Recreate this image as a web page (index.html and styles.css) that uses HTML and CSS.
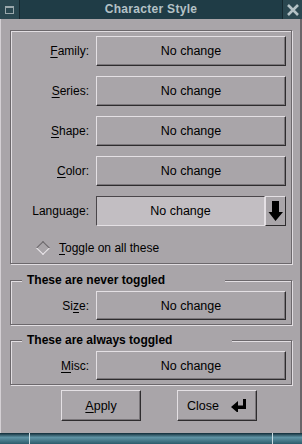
FILE: index.html
```html
<!DOCTYPE html>
<html>
<head>
<meta charset="utf-8">
<link rel="stylesheet" href="styles.css">
</head>
<body>
<div class="titlebar">
  <div class="tb-icon"><span class="tb-square"></span></div>
  <div class="tb-title">Character Style</div>
  <div class="tb-close">
    <svg width="14" height="14" viewBox="0 0 14 14"><path d="M2 2L12 12M12 2L2 12" stroke="#b4c2c6" stroke-width="2.6" fill="none"/></svg>
  </div>
</div>
<div class="window">
  <div class="frame main">
    <div class="row"><span class="label"><u>F</u>amily:</span><div class="btn field">No change</div></div>
    <div class="row"><span class="label"><u>S</u>eries:</span><div class="btn field">No change</div></div>
    <div class="row"><span class="label"><u>S</u>hape:</span><div class="btn field">No change</div></div>
    <div class="row"><span class="label"><u>C</u>olor:</span><div class="btn field">No change</div></div>
    <div class="row"><span class="label">Language:</span>
      <div class="combo">
        <div class="entry">No change</div>
        <div class="arrow-btn">
          <svg width="16" height="22" viewBox="0 0 16 22"><path d="M4 1H11V12H15L7.5 21L0.5 12H4Z" fill="#000"/></svg>
        </div>
      </div>
    </div>
    <div class="toggle"><span class="diamond"></span><span><u>T</u>oggle on all these</span></div>
  </div>

  <div class="frame sub first">
    <span class="legend">These are never toggled</span>
    <div class="row short"><span class="label">Si<u>z</u>e:</span><div class="btn field">No change</div></div>
  </div>

  <div class="frame sub second">
    <span class="legend">These are always toggled</span>
    <div class="row short"><span class="label"><u>M</u>isc:</span><div class="btn field">No change</div></div>
  </div>

  <div class="actions">
    <div class="btn action"><u>A</u>pply</div>
    <div class="btn action close">Close
      <svg width="16" height="13" viewBox="0 0 16 13"><path d="M0 8L7 2V6.5H12V0H15V10H7V14Z" fill="#000"/></svg>
    </div>
  </div>
</div>
<div class="taskbar"><span class="tick"></span><span class="grow"></span><span class="tick"></span></div>
</body>
</html>
```
FILE: styles.css
```css
html, body {
  margin: 0;
  padding: 0;
}
body {
  width: 302px;
  height: 444px;
  overflow: hidden;
  background: #a9a5a9;
  font-family: "Liberation Sans", Arial, sans-serif;
  font-size: 12px;
  color: #000;
}
u { text-decoration: underline; text-underline-offset: 2px; }

.titlebar {
  height: 19px;
  display: flex;
  background: #1f3c46;
}
.tb-icon {
  width: 19px;
  border-right: 1px solid #15282f;
  background: #2a4750;
  display: flex;
  align-items: center;
  justify-content: center;
}
.tb-square {
  width: 9px;
  height: 8px;
  border: 1px solid #9aa8ac;
  border-top-width: 2px;
  box-sizing: border-box;
}
.tb-title {
  flex: 1;
  text-align: center;
  line-height: 19px;
  font-weight: bold;
  color: #b4c2c6;
  letter-spacing: 0.3px;
}
.tb-close {
  width: 19px;
  border-left: 1px solid #15282f;
  background: #2a4750;
  display: flex;
  align-items: center;
  justify-content: center;
}

.window {
  height: 414px;
  border-left: 1px solid #d4d0d4;
  border-right: 2px solid #6a666a;
  box-sizing: border-box;
  padding-top: 11px;
  display: flex;
  flex-direction: column;
}

.frame {
  position: relative;
  margin-left: 9px;
  width: 282px;
  box-sizing: border-box;
  border: 1px solid #6c686c;
  box-shadow: inset 1px 1px 0 #e2dee2, 1px 1px 0 #e2dee2;
  padding: 5px 5px 0 0;
}
.main {
  display: flex;
  flex-direction: column;
  gap: 10px;
  padding-bottom: 7px;
}
.row {
  display: flex;
  align-items: center;
  gap: 7px;
  height: 30px;
}
.row.short { height: 29px; }
.label {
  width: 78px;
  text-align: right;
}
.btn {
  box-sizing: border-box;
  border-top: 1px solid #e4e0e4;
  border-left: 1px solid #e4e0e4;
  border-right: 1px solid #2e2c2e;
  border-bottom: 1px solid #2e2c2e;
  box-shadow: inset -1px -1px 0 #7a767a;
  background: #a9a5a9;
  display: flex;
  align-items: center;
  justify-content: center;
  font-size: 12.5px;
}
.field {
  width: 190px;
  height: 100%;
}
.combo {
  width: 190px;
  height: 100%;
  display: flex;
}
.entry {
  flex: 1;
  box-sizing: border-box;
  background: #c2bec2;
  border-top: 1px solid #4a464a;
  border-left: 1px solid #4a464a;
  border-right: 1px solid #e4e0e4;
  border-bottom: 1px solid #e4e0e4;
  display: flex;
  align-items: center;
  justify-content: center;
  font-size: 12.5px;
}
.arrow-btn {
  width: 21px;
  box-sizing: border-box;
  border-top: 1px solid #e4e0e4;
  border-left: 1px solid #e4e0e4;
  border-right: 1px solid #2e2c2e;
  border-bottom: 1px solid #2e2c2e;
  display: flex;
  align-items: center;
  justify-content: center;
}
.toggle {
  margin-top: 4px;
  height: 16px;
  display: flex;
  align-items: center;
  padding-left: 27px;
}
.diamond {
  width: 8px;
  height: 8px;
  transform: rotate(45deg);
  border-top: 1px solid #6a666a;
  border-left: 1px solid #6a666a;
  border-right: 1px solid #ece8ec;
  border-bottom: 1px solid #ece8ec;
  margin-right: 11px;
}

.sub {
  padding-top: 10px;
  padding-bottom: 4px;
}
.first { margin-top: 16px; }
.second { margin-top: 15px; }
.legend {
  position: absolute;
  top: -8px;
  left: 11px;
  background: #a9a5a9;
  padding: 0 60px 0 5px;
  font-weight: bold;
  line-height: 14px;
}

.actions {
  display: flex;
  gap: 36px;
  padding-left: 60px;
  margin-top: 5px;
}
.action {
  width: 80px;
  height: 31px;
}
.close { gap: 12px; }

.taskbar {
  height: 11px;
  margin-top: 0;
  background: linear-gradient(#0f2a36, #5f93a4 40%, #2c5c6c);
  display: flex;
}
.tick { width: 1px; background: #c8dce2; margin-left: 29px; }
.grow { flex: 1; }
.taskbar .tick:last-child { margin-left: 0; margin-right: 29px; }
```
